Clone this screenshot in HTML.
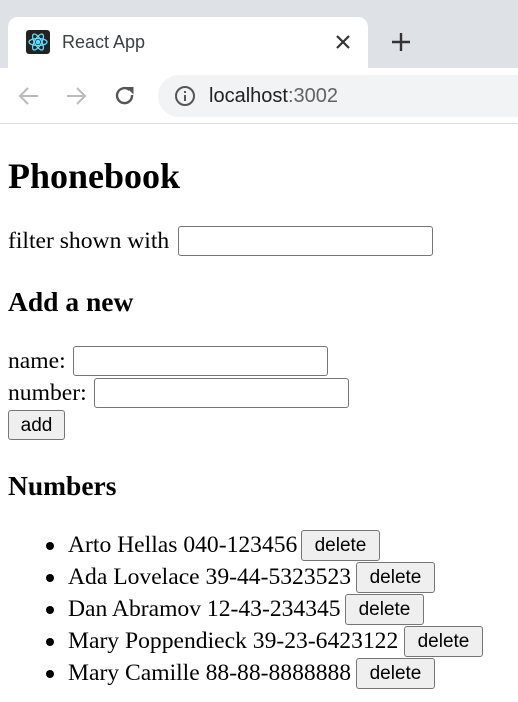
<!DOCTYPE html>
<html><head><meta charset="utf-8"><style>
body{margin:0;width:518px;height:702px;position:relative;overflow:hidden;background:#fff;font-family:"Liberation Serif",serif;color:#000}
.a{position:absolute;white-space:nowrap}
.t{font-size:23.6px;line-height:31px}
.inp{position:absolute;height:28px;border:1px solid #767676;border-radius:3px;background:#fff}
.btn{position:absolute;height:29px;border:1px solid #767676;border-radius:3px;background:#efefef;font-family:"Liberation Sans",sans-serif;font-size:19px;line-height:29px;text-align:center;box-sizing:border-box}
.dot{position:absolute;width:8px;height:8px;border-radius:50%;background:#000}
</style></head><body>
<div class="a" style="left:0;top:0;width:518px;height:68px;background:#dee1e6"></div>
<div class="a" style="left:8px;top:17px;width:360px;height:51px;background:#fff;border-radius:10px 10px 0 0"></div>
<div class="a" style="left:26px;top:30px;width:24px;height:24px;background:#222;border-radius:3px">
<svg width="24" height="24" viewBox="0 0 24 24" fill="none" stroke="#61dafb" stroke-width="1.3"><ellipse cx="12" cy="12" rx="9" ry="3.5"/><ellipse cx="12" cy="12" rx="9" ry="3.5" transform="rotate(60 12 12)"/><ellipse cx="12" cy="12" rx="9" ry="3.5" transform="rotate(120 12 12)"/><circle cx="12" cy="12" r="1.6" fill="#61dafb"/></svg></div>
<div class="a" style="left:62px;top:30px;font-family:'Liberation Sans',sans-serif;font-size:18px;color:#3c4043;line-height:24px">React App</div>
<svg class="a" style="left:336px;top:35px" width="14" height="14" stroke="#333" stroke-width="2.2"><path d="M1 1L13 13M13 1L1 13"/></svg>
<svg class="a" style="left:391px;top:32px" width="20" height="20" stroke="#333" stroke-width="2.4"><path d="M10 1V19M1 10H19"/></svg>
<div class="a" style="left:0;top:68px;width:518px;height:55px;background:#fff;border-bottom:1px solid #ddd"></div>
<svg class="a" style="left:17px;top:84px" width="24" height="24" stroke="#bbb" stroke-width="2" fill="none"><path d="M21 12H4M11 4L3 12L11 20"/></svg>
<svg class="a" style="left:64px;top:84px" width="24" height="24" stroke="#bbb" stroke-width="2" fill="none"><path d="M3 12H20M13 4L21 12L13 20"/></svg>
<svg class="a" style="left:113px;top:84px" width="24" height="24" fill="none"><path d="M19 11A7.5 7.5 0 1 1 16.5 6" stroke="#555" stroke-width="2.4"/><path d="M13 3L20.5 3L20.5 10.5Z" fill="#555"/></svg>
<div class="a" style="left:158px;top:75px;width:380px;height:42px;border-radius:21px;background:#f1f3f4"></div>
<svg class="a" style="left:174px;top:85px" width="22" height="22" fill="none" stroke="#555" stroke-width="2"><circle cx="11" cy="11" r="9"/><path d="M11 10V16M11 6V8"/></svg>
<div class="a" style="left:209px;top:83px;font-family:'Liberation Sans',sans-serif;font-size:20px;line-height:26px;color:#202124">localhost<span style="color:#5f6368">:3002</span></div>

<div class="a" style="left:8px;top:154px;font-size:36px;font-weight:bold;line-height:44px">Phonebook</div>
<div class="a t" style="left:8px;top:226px">filter shown with</div>
<div class="inp" style="left:178px;top:226px;width:253px"></div>
<div class="a" style="left:8px;top:285px;font-size:27.5px;font-weight:bold;line-height:34px">Add a new</div>
<div class="a t" style="left:8px;top:346px">name:</div>
<div class="inp" style="left:73px;top:346px;width:253px"></div>
<div class="a t" style="left:8px;top:378px">number:</div>
<div class="inp" style="left:94px;top:378px;width:253px"></div>
<div class="btn" style="left:8px;top:410px;width:57px;height:30px">add</div>
<div class="a" style="left:8px;top:469px;font-size:27.5px;font-weight:bold;line-height:34px">Numbers</div>

<div class="dot" style="left:46px;top:542px"></div><div class="a t" style="left:68px;top:530px">Arto Hellas 040-123456</div><div class="btn" style="left:301px;top:530px;width:79px;height:31px">delete</div>
<div class="dot" style="left:46px;top:574px"></div><div class="a t" style="left:68px;top:562px">Ada Lovelace 39-44-5323523</div><div class="btn" style="left:356px;top:562px;width:79px;height:31px">delete</div>
<div class="dot" style="left:46px;top:606px"></div><div class="a t" style="left:68px;top:594px">Dan Abramov 12-43-234345</div><div class="btn" style="left:345px;top:594px;width:79px;height:31px">delete</div>
<div class="dot" style="left:46px;top:638px"></div><div class="a t" style="left:68px;top:626px">Mary Poppendieck 39-23-6423122</div><div class="btn" style="left:404px;top:626px;width:79px;height:31px">delete</div>
<div class="dot" style="left:46px;top:670px"></div><div class="a t" style="left:68px;top:658px">Mary Camille 88-88-8888888</div><div class="btn" style="left:356px;top:658px;width:79px;height:31px">delete</div>
</body></html>
